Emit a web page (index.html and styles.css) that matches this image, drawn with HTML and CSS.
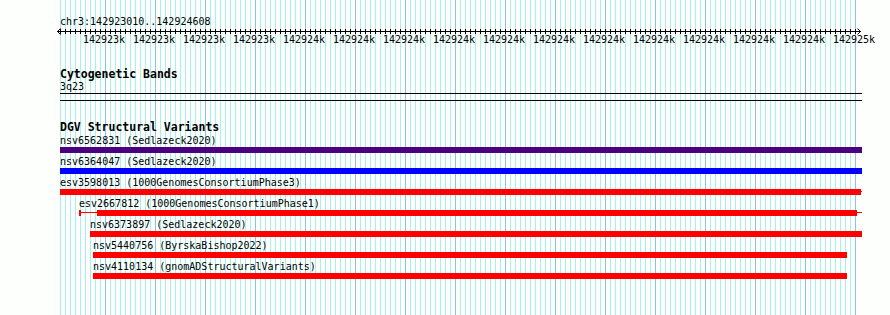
FILE: index.html
```html
<!DOCTYPE html>
<html lang="en">
<head>
    <meta charset="UTF-8">
    <title>Genome Browser</title>
    <link rel="stylesheet" href="styles.css">
</head>
<body>
    <div class="genome-view">
        <div class="ref-seq">chr3:142923010..142924608</div>
        <svg class="ruler" width="890" height="7" viewBox="0 0 890 7">
            <defs>
                <pattern id="ticks" x="60" y="0" width="5" height="7" patternUnits="userSpaceOnUse">
                    <rect x="0" y="1" width="1" height="5" fill="#000"></rect>
                </pattern>
            </defs>
            <rect x="57" y="3" width="804" height="1" fill="#000"></rect>
            <rect x="60" y="0" width="796" height="7" fill="url(#ticks)"></rect>
            <polyline points="60.5,0.5 57.5,3.5 60.5,6.5" fill="none" stroke="#000"></polyline>
            <polyline points="857.5,0.5 860.5,3.5 857.5,6.5" fill="none" stroke="#000"></polyline>
        </svg>
        <div class="ruler-labels">
            <span>142923k</span><span>142923k</span><span>142923k</span><span>142923k</span>
            <span>142924k</span><span>142924k</span><span>142924k</span><span>142924k</span>
            <span>142924k</span><span>142924k</span><span>142924k</span><span>142924k</span>
            <span>142924k</span><span>142924k</span><span>142924k</span><span>142925k</span>
        </div>

        <div class="track cyto">
            <div class="track-title">Cytogenetic Bands</div>
            <div class="band-label">3q23</div>
            <div class="band"></div>
        </div>

        <div class="track dgv">
            <div class="track-title">DGV Structural Variants</div>

            <div class="feature" style="margin-left:0px;width:802px">
                <div class="feature-label">nsv6562831 (Sedlazeck2020)</div>
                <div class="feature-bar"><div class="block complex" style="width:802px"></div></div>
            </div>
            <div class="feature" style="margin-left:0px;width:802px">
                <div class="feature-label">nsv6364047 (Sedlazeck2020)</div>
                <div class="feature-bar"><div class="block gain" style="width:802px"></div></div>
            </div>
            <div class="feature" style="margin-left:0px;width:802px">
                <div class="feature-label">esv3598013 (1000GenomesConsortiumPhase3)</div>
                <div class="feature-bar span"><div class="block loss" style="width:801px"></div></div>
            </div>
            <div class="feature" style="margin-left:19px;width:783px">
                <div class="feature-label">esv2667812 (1000GenomesConsortiumPhase1)</div>
                <div class="feature-bar span capped"><div class="block loss" style="margin-left:16px;width:760px"></div></div>
            </div>
            <div class="feature" style="margin-left:30px;width:772px">
                <div class="feature-label">nsv6373897 (Sedlazeck2020)</div>
                <div class="feature-bar"><div class="block loss" style="width:772px"></div></div>
            </div>
            <div class="feature" style="margin-left:33px;width:754px">
                <div class="feature-label">nsv5440756 (ByrskaBishop2022)</div>
                <div class="feature-bar"><div class="block loss" style="width:754px"></div></div>
            </div>
            <div class="feature" style="margin-left:33px;width:754px">
                <div class="feature-label">nsv4110134 (gnomADStructuralVariants)</div>
                <div class="feature-bar"><div class="block loss" style="width:754px"></div></div>
            </div>
        </div>
    </div>
</body>
</html>
```

FILE: styles.css
```css
body {
    margin: 0;
    padding: 0;
    background-color: #fcfffc;
    font-family: "DejaVu Sans Mono", monospace;
    font-size: 10px;
    line-height: 12px;
    color: #000;
}

/* grid lines: minor every 5px, major every 50px */
.genome-view {
    min-height: 315px;
    overflow: hidden;
    background-image:
        repeating-linear-gradient(to right, #8fc0e6 0 1px, transparent 1px 50px),
        repeating-linear-gradient(to right, #aaeeee 0 1px, transparent 1px 5px);
    background-position: 105px 0, 60px 0;
    background-size: 751px 100%, 796px 100%;
    background-repeat: no-repeat;
}

.ref-seq {
    padding: 16px 0 0 60px;
}

.ruler {
    display: block;
}

.ruler-labels {
    display: flex;
    margin-top: -1px;
    padding-left: 79px;
}

.ruler-labels span {
    flex: 0 0 50px;
    text-align: center;
}

.track {
    padding-left: 60px;
}

.track-title {
    font-weight: bold;
    font-size: 11.5px;
    line-height: 13px;
}

.cyto {
    margin-top: 22px;
}

.band {
    width: 802px;
    height: 6px;
    border-top: 1px solid #000;
    border-bottom: 1px solid #000;
}

.dgv {
    margin-top: 20px;
}

.dgv .track-title {
    margin-bottom: 1px;
}

.feature {
    margin-bottom: 3px;
}

.feature-label {
    white-space: nowrap;
}

.feature-bar {
    display: flex;
    height: 6px;
}

.feature-bar.span {
    background: linear-gradient(#ff0000, #ff0000) no-repeat 0 2px / 100% 1px;
}

.feature-bar.capped {
    border-left: 2px solid #ff0000;
}

.block {
    height: 6px;
    flex: none;
}

.block.complex {
    background-color: #4b0082;
}

.block.gain {
    background-color: #0000ff;
}

.block.loss {
    background-color: #ff0000;
}
```
